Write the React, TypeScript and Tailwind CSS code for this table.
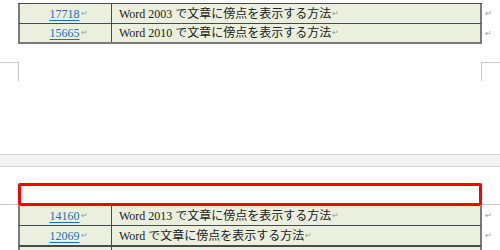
const serif = { fontFamily: '"Liberation Serif", "Noto Sans CJK JP", serif' };

type Row = { id: string; title: string };

const topRows: Row[] = [
  { id: "17718", title: "Word 2003 で文章に傍点を表示する方法" },
  { id: "15665", title: "Word 2010 で文章に傍点を表示する方法" },
];

const bottomRows: Row[] = [
  { id: "14160", title: "Word 2013 で文章に傍点を表示する方法" },
  { id: "12069", title: "Word で文章に傍点を表示する方法" },
];

function Mark() {
  return <span className="ml-[1px] text-[8px] leading-none text-[#9a9a9a]">↵</span>;
}

// one table row plus the end-of-row mark that sits past the right border
function TableRow({ row, last }: { row: Row; last?: boolean }) {
  return (
    <div className="flex">
      <div
        className={`flex h-[20px] w-[464px] border-x-2 border-[#7a7a7a] bg-[#eaf0dd] ${
          last ? "border-b-2" : "border-b border-b-[#4a4a4a]"
        }`}
      >
        <div className="flex w-[92px] items-center justify-center border-r border-[#4a4a4a] pl-[6px]">
          <span className="text-[#1a6fc4] underline underline-offset-2 decoration-[#1a6fc4]">{row.id}</span>
          <Mark />
        </div>
        <div className="flex flex-1 items-center pl-[7px] text-[#222]">
          {row.title}
          <Mark />
        </div>
      </div>
      <div className="flex items-center pl-[2px]">
        <Mark />
      </div>
    </div>
  );
}

export default function App() {
  return (
    <div className="h-[250px] w-[500px] overflow-hidden bg-white text-[12px]" style={serif}>
      {/* previous page: end of table and bottom crop marks */}
      <div className="flex h-[154px] flex-col">
        <div className="mt-[3px] ml-[18px]">
          <div className="w-[464px] border-t border-[#4a4a4a]" />
          {topRows.map((r, i) => (
            <TableRow key={r.id} row={r} last={i === topRows.length - 1} />
          ))}
        </div>
        <div className="mt-[18px] flex justify-between">
          <div className="h-[19px] w-[19px] border-t border-r border-[#c8c8c8]" />
          <div className="h-[19px] w-[19px] border-t border-l border-[#c8c8c8]" />
        </div>
      </div>

      {/* gap between pages */}
      <div className="h-[13px] border-y border-[#d4d4d4] bg-[#f3f3f3]" />

      {/* next page */}
      <div className="mt-[16px] flex">
        <div className="h-[22px] w-[18px] border-b border-[#c8c8c8]" />
        <div className="h-[23px] w-[464px] rounded-[2px] border-[3px] border-[#ff0000]" />
        <div className="h-[22px] flex-1 border-b border-[#c8c8c8]" />
      </div>
      <div className="ml-[18px]">
        {bottomRows.map((r) => (
          <TableRow key={r.id} row={r} />
        ))}
        <div className="w-[464px] border-x-2 border-t border-[#7a7a7a] border-t-[#4a4a4a]">
          <div className="flex h-[19px] bg-[#eaf0dd]">
            <div className="w-[92px] border-r border-[#4a4a4a]" />
            <div className="flex-1 pl-[78px] pt-[1px] text-[#333]">Word 2007 で文章に傍点を表示する方法</div>
          </div>
        </div>
      </div>
    </div>
  );
}
